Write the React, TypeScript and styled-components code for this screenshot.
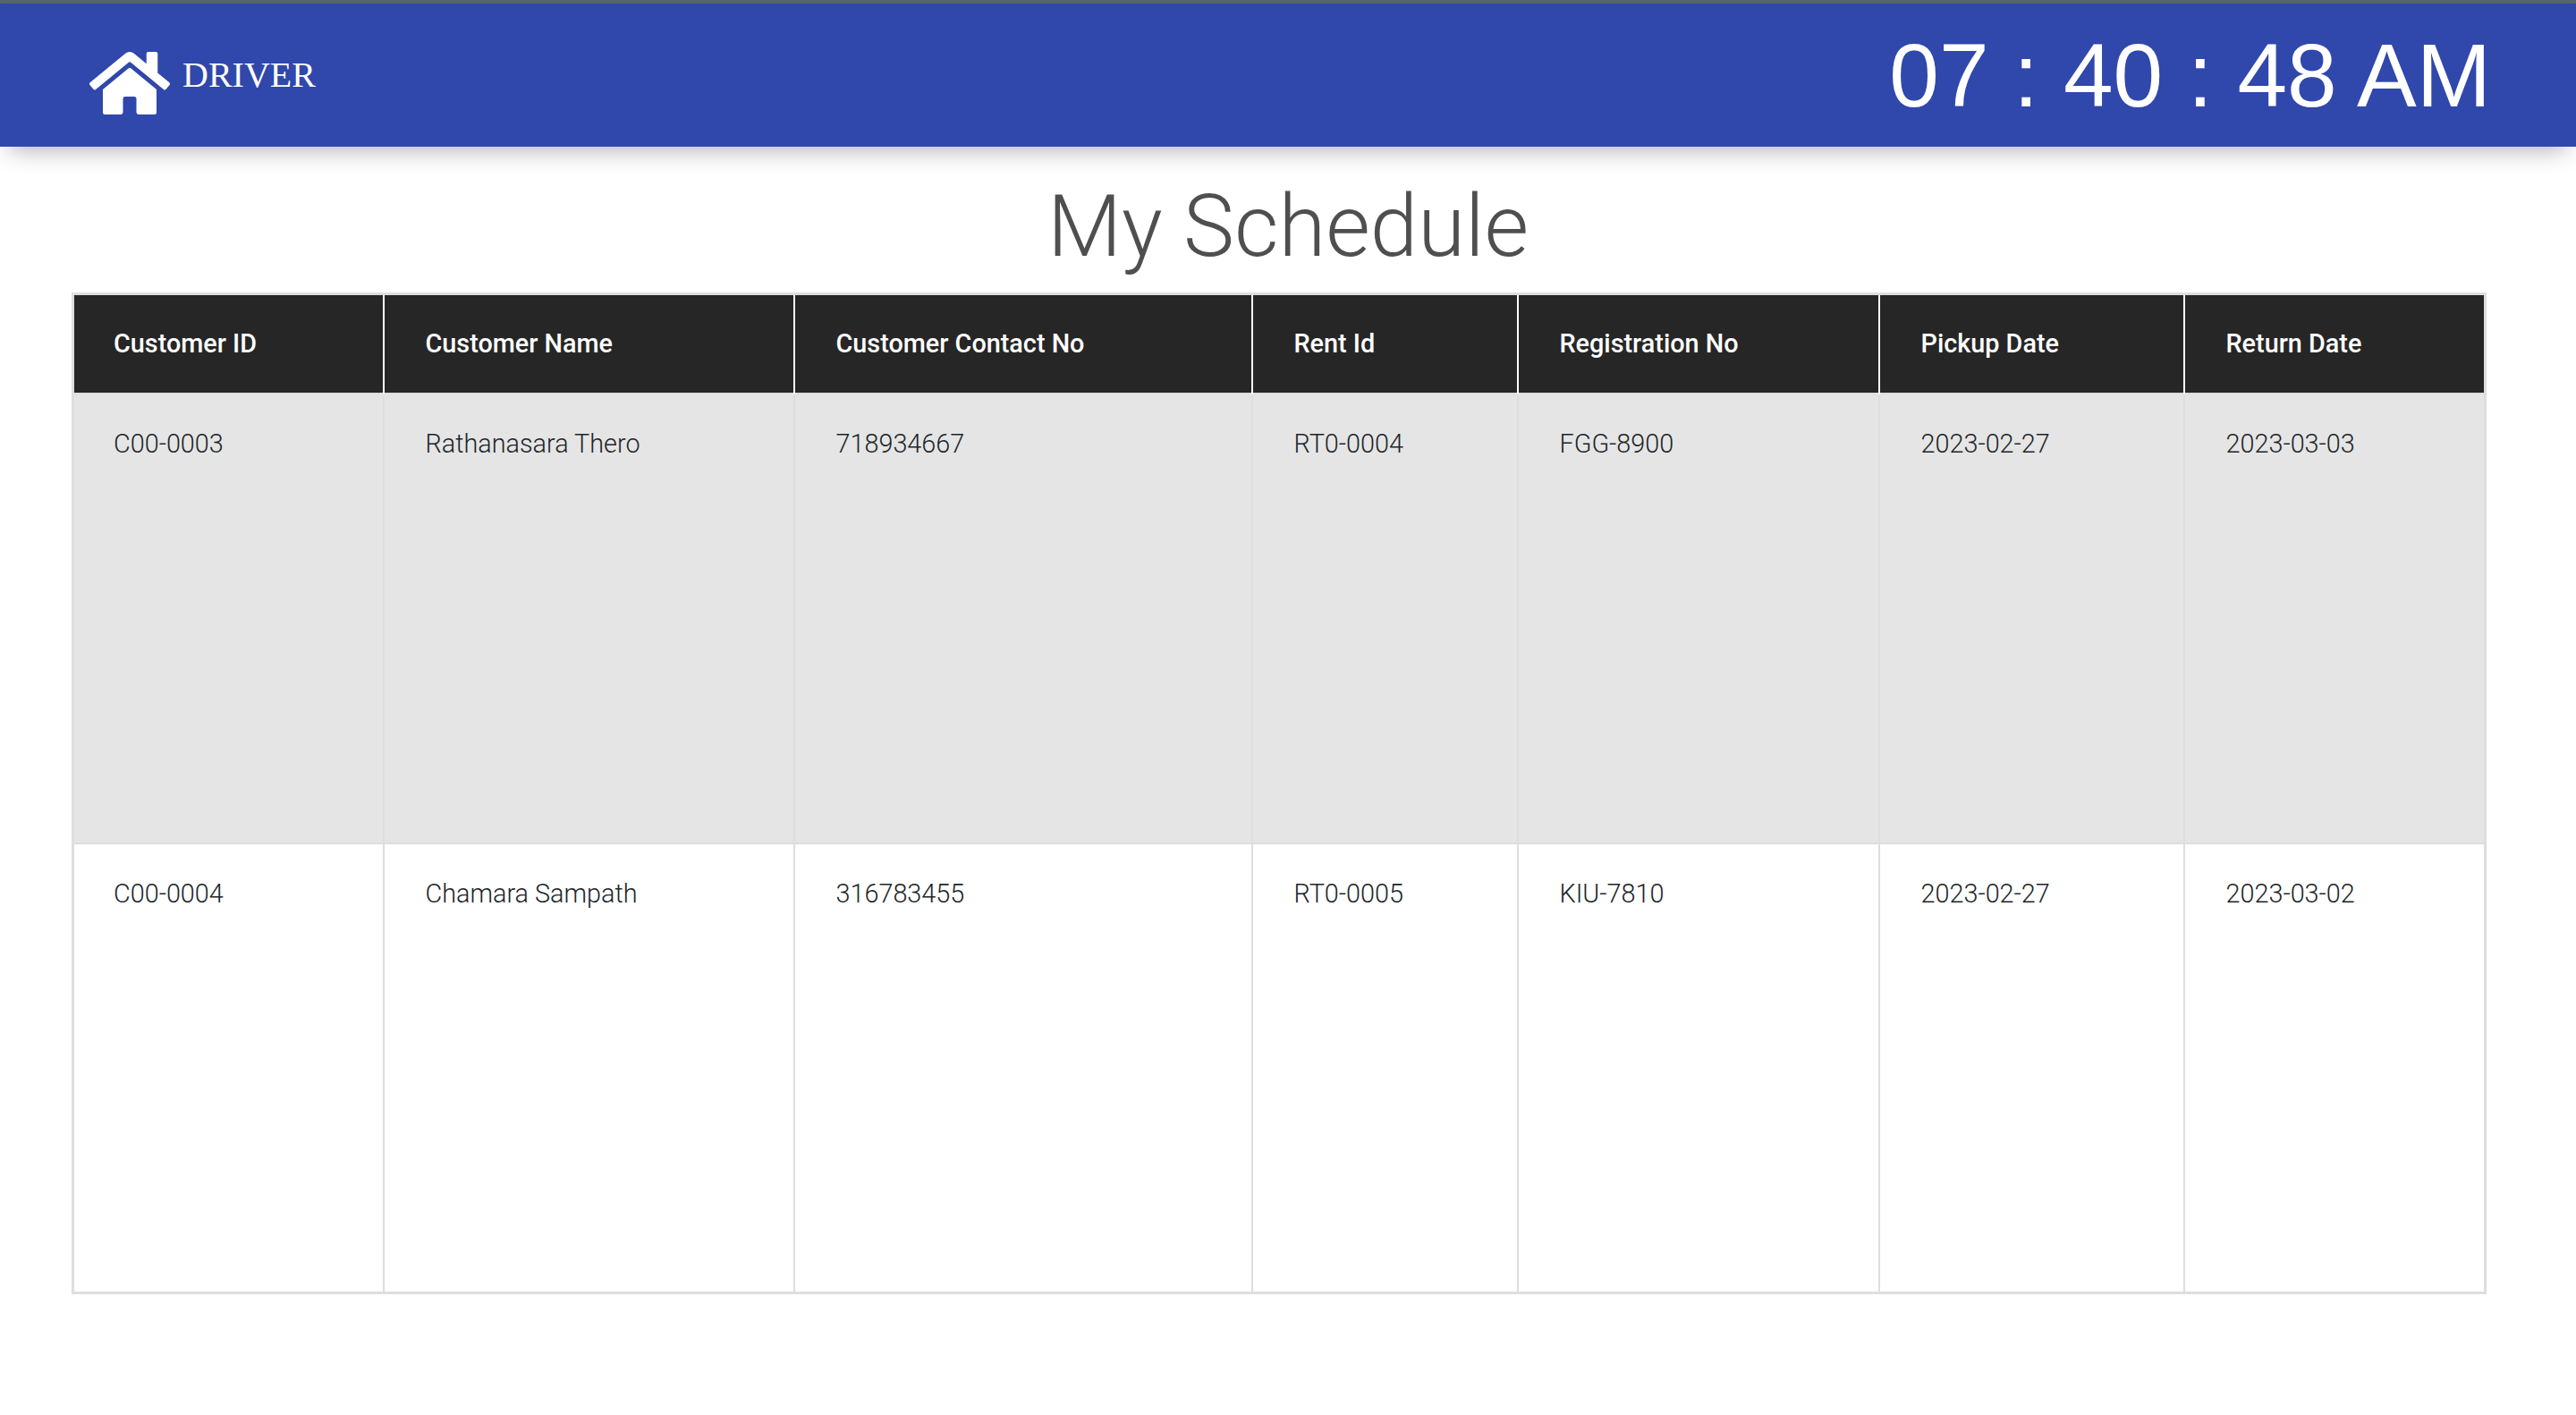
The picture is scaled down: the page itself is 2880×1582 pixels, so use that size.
import { createGlobalStyle, styled } from "styled-components"
import { FaHome } from "react-icons/fa"

const GlobalStyle = createGlobalStyle`
	html, body {
		margin: 0;
		padding: 0;
		background: #fff;
		font-family: Roboto, "Liberation Sans", sans-serif;
	}
`

const TopStrip = styled.div`
	height: 4px;
	background: #56656b;
`

const Header = styled.header`
	position: relative;
	height: 160px;
	padding: 0 95px 0 100px;
	box-sizing: border-box;
	display: flex;
	align-items: center;
	justify-content: space-between;
	background: #3047ac;
	color: #fff;
	box-shadow: 0 14px 24px -10px rgba(0, 0, 0, 0.3);
`

const Brand = styled.div`
	display: flex;
	align-items: center;
	gap: 14px;
	font-family: "Liberation Serif", serif;
	font-size: 40px;
	line-height: 1;
	svg {
		width: 90px;
		height: 80px;
		margin-top: 18px;
	}
	span {
		margin-bottom: 18px;
		margin-top: 18px;
	}
`

const Clock = styled.div`
	font-family: "Liberation Sans", Arial, sans-serif;
	font-size: 100px;
	line-height: 1;
`

const Title = styled.h1`
	margin: 0;
	height: 163px;
	padding-top: 14px;
	box-sizing: border-box;
	display: flex;
	align-items: center;
	justify-content: center;
	font-size: 96px;
	font-weight: 300;
	color: #4f4f4f;
`

const TableWrap = styled.div`
	padding: 0 100px 0 80px;
`

const Table = styled.table`
	width: 100%;
	table-layout: fixed;
	border-collapse: collapse;
	border: 3px solid #dedede;
	font-size: 28.8px;
`

const Col = styled.col<{ $width: number }>`
	width: ${(p) => p.$width}px;
`

const HeadRow = styled.tr`
	height: 111px;
	background: #262626;
`

const HeadCell = styled.th`
	padding: 0 44px 0 46px;
	border-left: 2px solid #fff;
	border-top: 2px solid #dedede;
	text-align: left;
	font-weight: 500;
	color: #fff;
	&:first-child {
		border-left: none;
		padding-left: 44px;
	}
`

const Row = styled.tr<{ $striped: boolean }>`
	height: 503px;
	background: ${(p) => (p.$striped ? "#e5e5e5" : "#fff")};
`

const Cell = styled.td`
	padding: 38px 44px 38px 46px;
	border: 2px solid #dedede;
	vertical-align: top;
	font-weight: 300;
	color: #212529;
	&:first-child {
		padding-left: 44px;
	}
`

const columns = [
	{ title: "Customer ID", width: 347 },
	{ title: "Customer Name", width: 459 },
	{ title: "Customer Contact No", width: 512 },
	{ title: "Rent Id", width: 297 },
	{ title: "Registration No", width: 404 },
	{ title: "Pickup Date", width: 341 },
	{ title: "Return Date", width: 337 }
]

const rows = [
	["C00-0003", "Rathanasara Thero", "718934667", "RT0-0004", "FGG-8900", "2023-02-27", "2023-03-03"],
	["C00-0004", "Chamara Sampath", "316783455", "RT0-0005", "KIU-7810", "2023-02-27", "2023-03-02"]
]

export default function App() {
	return (
		<>
			<GlobalStyle />
			<TopStrip />
			<Header>
				<Brand>
					<FaHome />
					<span>DRIVER</span>
				</Brand>
				<Clock>07 : 40 : 48 AM</Clock>
			</Header>
			<Title>My Schedule</Title>
			<TableWrap>
				<Table>
					<colgroup>
						{columns.map((c) => (
							<Col key={c.title} $width={c.width} />
						))}
					</colgroup>
					<thead>
						<HeadRow>
							{columns.map((c) => (
								<HeadCell key={c.title}>{c.title}</HeadCell>
							))}
						</HeadRow>
					</thead>
					<tbody>
						{rows.map((r, i) => (
							<Row key={r[0]} $striped={i === 0}>
								{r.map((v) => (
									<Cell key={v}>{v}</Cell>
								))}
							</Row>
						))}
					</tbody>
				</Table>
			</TableWrap>
		</>
	)
}
